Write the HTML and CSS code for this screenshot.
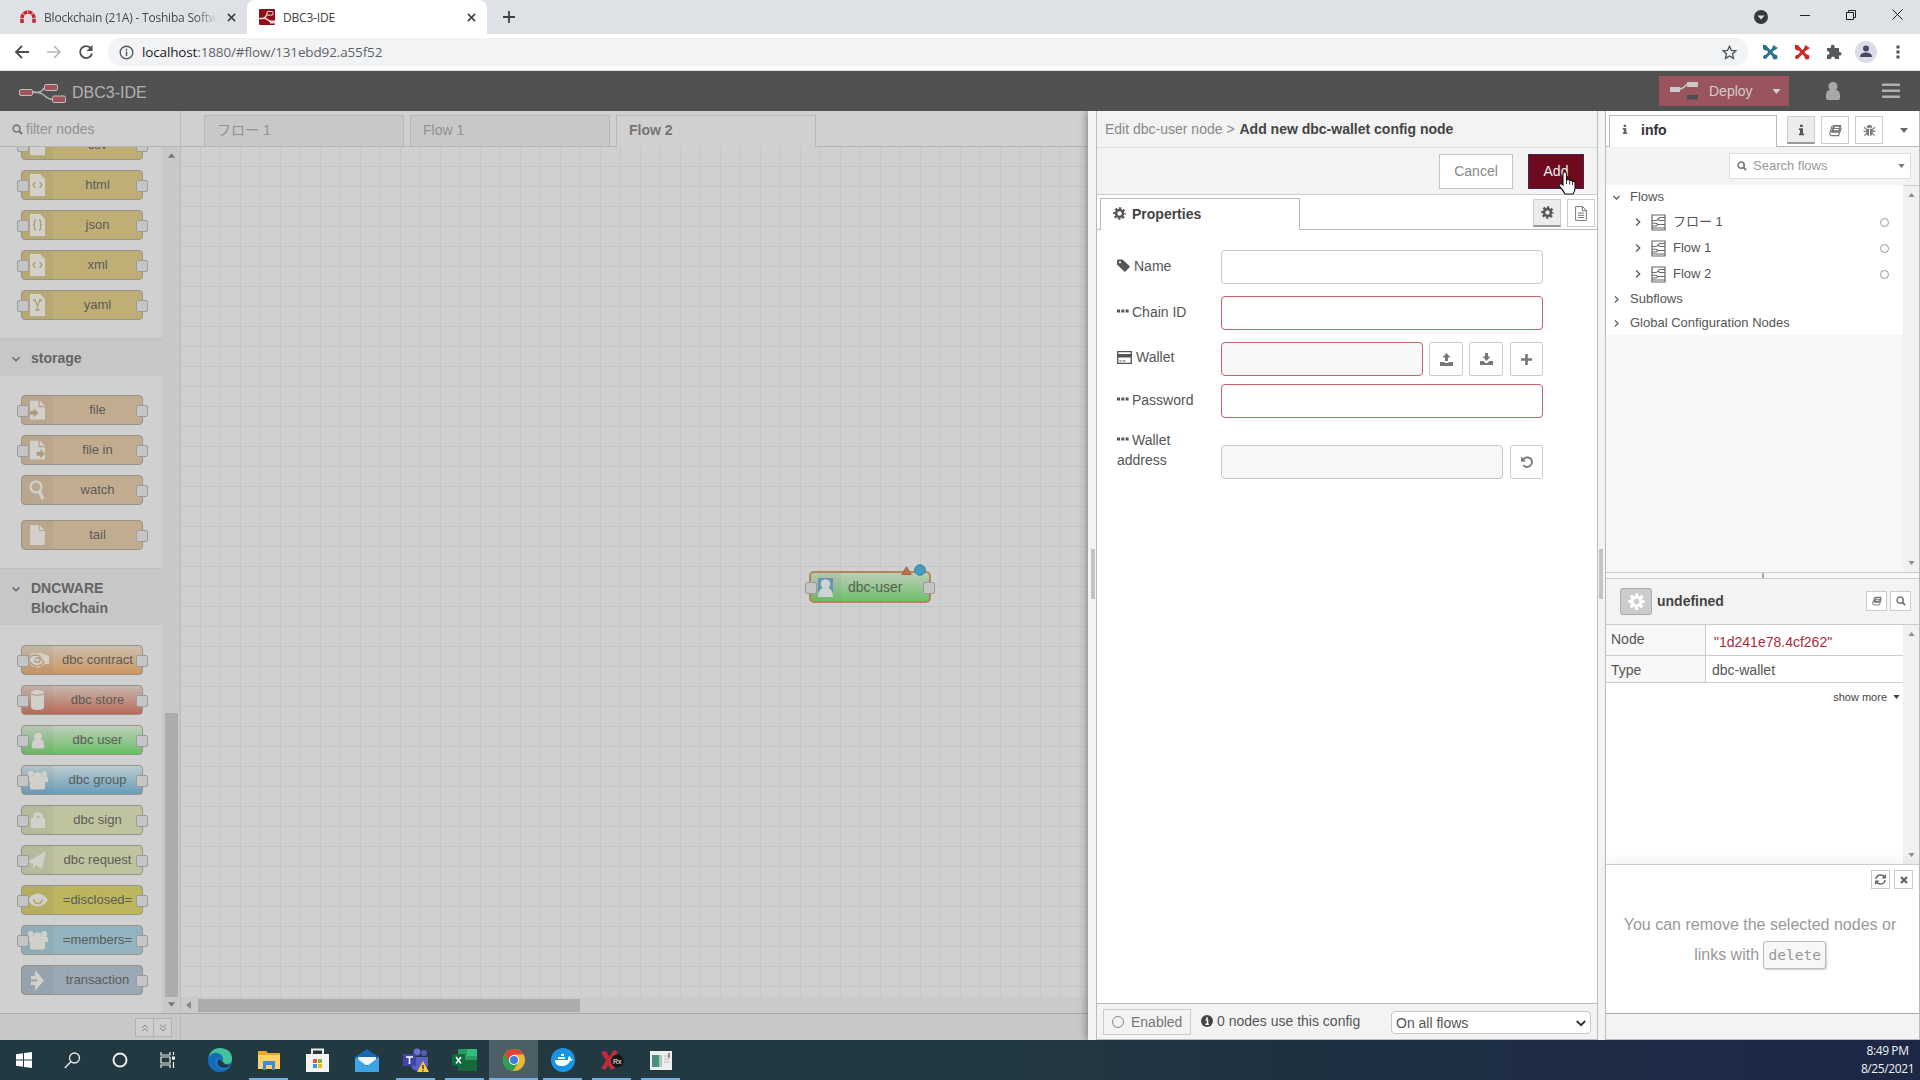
FILE: index.html
```html
<!DOCTYPE html>
<html lang="en">
<head>
<meta charset="utf-8">
<title>DBC3-IDE</title>
<link rel="stylesheet" href="styles.css">
</head>
<body>
<svg class="defs" width="0" height="0">
  <defs>
    <symbol id="chev-down" viewBox="0 0 10 10"><path d="M1.5 3.2 5 6.7 8.5 3.2" fill="none" stroke="currentColor" stroke-width="1.4"/></symbol>
    <symbol id="chev-bold" viewBox="0 0 10 10"><path d="M.8 3 5 7.200 9.200 3" fill="none" stroke="currentColor" stroke-width="2"/></symbol>
    <symbol id="chev-right" viewBox="0 0 10 10"><path d="M3.2 1.5 6.7 5 3.2 8.5" fill="none" stroke="currentColor" stroke-width="1.3"/></symbol>
    <symbol id="close" viewBox="0 0 10 10"><path d="M1 1 9 9M9 1 1 9" fill="none" stroke="currentColor" stroke-width="1.7"/></symbol>
    <symbol id="search" viewBox="0 0 12 12"><circle cx="5" cy="5" r="3.7" fill="none" stroke="currentColor" stroke-width="1.8"/><path d="M7.6 7.6 11 11" stroke="currentColor" stroke-width="2.2"/></symbol>
    <symbol id="gear" viewBox="0 0 16 16"><circle cx="8" cy="8" r="4.2" fill="none" stroke="currentColor" stroke-width="3"/><circle cx="8" cy="8" r="6.4" fill="none" stroke="currentColor" stroke-width="2.6" stroke-dasharray="2.8 2.226" stroke-dashoffset="1.4"/></symbol>
    <symbol id="dots" viewBox="0 0 12 4"><path d="M0 .5h3v3H0zM4.3.5h3v3h-3zM8.6.5h3v3h-3z" fill="currentColor"/></symbol>
    <symbol id="book" viewBox="0 0 14 14"><path d="M4.500 1h9l-2.500 8.500H2z" fill="currentColor"/><path d="M6 3.600h5M5.300 6h5" stroke="#fff" stroke-width="1.200"/><path d="M3.300 2 1 9.500q-.4 3 1.600 3h7.700L13.300 4" fill="none" stroke="currentColor" stroke-width="1.300"/></symbol>
    <symbol id="bug" viewBox="0 0 14 14"><path d="M4 4q0-3 3-3t3 3zM3.500 5h3v8q-3-.5-3-4zM7.500 5h3v4q0 3.500-3 4z" fill="currentColor"/><path d="M1 3.500 4 6M13 3.500 10 6M.5 8H4m6 0h3.500M1.500 12.500 4 10m8.500 2.500L10 10" stroke="currentColor" stroke-width="1.200"/></symbol>
    <symbol id="info-i" viewBox="0 0 8 14"><path d="M2.300.8h3.200v2.700H2.300zM1 5h4.700v6H7v2H1v-2h1.300V7H1z" fill="currentColor"/></symbol>
    <symbol id="flow" viewBox="0 0 15 17"><path d="M1 1h13v15H1z" fill="none" stroke="currentColor" stroke-width="1.200"/><path d="M1 6.500h3q2.500 0 3.500-1.800M14 3.500H9q-1.500 0-1.500 1.300T9 6.500h5M1 9.300h4q1.500 0 1.500 1.200T5 12H1M6.500 10.500H14M1 14h13" fill="none" stroke="currentColor" stroke-width="1.100"/></symbol>
    <symbol id="file" viewBox="0 0 16 22"><path d="M0 0h10l6 6v16H0z" fill="currentColor"/><path d="M10 0v6h6" fill="none" stroke="#b5a284"/></symbol>
    <symbol id="person" viewBox="0 0 16 18"><circle cx="8" cy="4.500" r="4.500" fill="currentColor"/><path d="M1 14q0-6 4-6h6q4 0 4 6v2q0 2-2 2H3q-2 0-2-2z" fill="currentColor"/></symbol>
    <symbol id="people" viewBox="0 0 22 20"><circle cx="4" cy="3.500" r="3" fill="currentColor"/><circle cx="18" cy="3.500" r="3" fill="currentColor"/><path d="M0 12V9q0-3 3-3h16q3 0 3 3v3h-3v5q0 3-3 3H6q-3 0-3-3v-5z" fill="currentColor"/><circle cx="11" cy="6" r="4" fill="currentColor"/></symbol>
    <symbol id="tri-up" viewBox="0 0 8 5"><path d="M0 5 4 0l4 5z" fill="currentColor"/></symbol>
    <symbol id="tri-down" viewBox="0 0 8 5"><path d="M0 0h8L4 5z" fill="currentColor"/></symbol>
    <symbol id="tri-left" viewBox="0 0 5 8"><path d="M5 0v8L0 4z" fill="currentColor"/></symbol>
    <symbol id="wrench" viewBox="0 0 16 16"><path d="M3 13.500 12.500 4M3.500 3 13 13" stroke="currentColor" stroke-width="3"/><path d="M1 1v4l3 2 2-3-2-3zM11 1l-1 4 3 1 3-2" fill="currentColor"/><circle cx="13" cy="13" r="2.500" fill="currentColor"/><circle cx="3" cy="13" r="2" fill="currentColor"/></symbol>
  </defs>
</svg>

<div class="tabstrip">
  <div class="btab first">
    <svg width="16" height="16" viewBox="0 0 16 16"><path d="M2 14V9a6 6 0 0 1 12 0v5" fill="none" stroke="#c4262c" stroke-width="3.500" stroke-dasharray="4 .8"/></svg>
    <span class="btitle fade">Blockchain (21A) - Toshiba Softw</span>
    <svg class="bclose" width="9" height="9"><use href="#close"/></svg>
  </div>
  <div class="btab active">
    <svg width="16" height="16" viewBox="0 0 16 16"><rect width="16" height="16" rx="1" fill="#8f1016"/><path d="M0 9.500h3q3 0 4-2.500t3-2.500M4 9q3 0 5 2t5 2" fill="none" stroke="#f1dede" stroke-width="1.300"/><rect x="8" y="2.500" width="6" height="3.600" rx="1" fill="#8f1016" stroke="#f1dede"/><path d="M11 11.500h5v3h-5z" fill="#f1dede"/></svg>
    <span class="btitle">DBC3-IDE</span>
    <svg class="bclose" width="9" height="9"><use href="#close"/></svg>
  </div>
  <svg class="plus" width="12" height="12" viewBox="0 0 12 12"><path d="M6 0v12M0 6h12" stroke="#3c4043" stroke-width="1.800"/></svg>
  <div class="winctl">
    <svg width="14" height="14" viewBox="0 0 14 14"><circle cx="7" cy="7" r="7" fill="#35393d"/><path d="M3.500 5.500h7L7 9.500z" fill="#dee1e6"/></svg>
    <svg width="10" height="10" viewBox="0 0 10 10"><path d="M0 5.500h10" stroke="#222"/></svg>
    <svg width="10" height="10" viewBox="0 0 10 10"><path d="M.5 2.500h7v7h-7zM2.500 2.500v-2h7v7h-2" fill="none" stroke="#222"/></svg>
    <svg width="11" height="11" viewBox="0 0 11 11"><path d="M.5.5l10 10M10.500.5l-10 10" stroke="#222"/></svg>
  </div>
</div>

<div class="toolbar">
  <svg width="16" height="16" viewBox="0 0 16 16"><path d="M15 8H2M8 2 2 8l6 6" fill="none" stroke="#4b4f53" stroke-width="1.800"/></svg>
  <svg width="16" height="16" viewBox="0 0 16 16"><path d="M1 8h13M8 2l6 6-6 6" fill="none" stroke="#b4b7ba" stroke-width="1.600"/></svg>
  <svg width="16" height="16" viewBox="0 0 16 16"><path d="M13 4.500A6 6 0 1 0 14 9.500" fill="none" stroke="#4b4f53" stroke-width="1.800"/><path d="M14.500 1v6h-6z" fill="#4b4f53"/></svg>
  <div class="address">
    <svg width="15" height="15" viewBox="0 0 15 15"><circle cx="7.500" cy="7.500" r="6.300" fill="none" stroke="#55595d" stroke-width="1.400"/><path d="M7.500 6.500V11M7.500 3.800v1.600" stroke="#55595d" stroke-width="1.500"/></svg>
    <span class="url"><b>localhost</b>:1880/#flow/131ebd92.a55f52</span>
    <svg class="star" width="15" height="15" viewBox="0 0 15 15"><path d="m7.500 1.200 1.900 4.200 4.500.4-3.400 3 1 4.500-4-2.400-4 2.400 1-4.500-3.400-3 4.500-.4z" fill="none" stroke="#4b4f53" stroke-width="1.300"/></svg>
  </div>
  <div class="ext">
    <svg width="16" height="16" color="#2b7391"><use href="#wrench"/></svg>
    <svg width="16" height="16" color="#cf2a28"><use href="#wrench"/></svg>
    <svg width="16" height="16" viewBox="0 0 16 16"><path d="M1 4h4q-.8-3.300 1.700-3.300T8.500 4H13v4q2.500-.5 2.500 1.700T13 11.500V15H9q0-2.500-2-2.500T5 15H1v-4q2.500 0 2.500-2T1 7z" fill="#55595d"/></svg>
    <svg width="22" height="22" viewBox="0 0 22 22"><circle cx="11" cy="11" r="11" fill="#dadce6"/><circle cx="11" cy="7.500" r="3" fill="#46486b"/><path d="M5 16q0-4.500 6-4.500t6 4.500z" fill="#46486b"/></svg>
    <svg width="4" height="14" viewBox="0 0 4 14"><path d="M.5.5h3v3h-3zM.5 5.500h3v3h-3zM.5 10.500h3v3h-3z" fill="#4b4f53"/></svg>
  </div>
</div>

<header class="header">
  <svg class="logo" width="48" height="20" viewBox="0 0 48 20"><path d="M13 9q9 2 12-4M14 9q8 0 12 4t9 3" fill="none" stroke="#b5b5b5" stroke-width="1.600"/><g fill="#a0545a" stroke="#bdbdbd"><rect x=".5" y="6.500" width="13" height="6" rx="1.500"/><rect x="25.500" y="1.500" width="13" height="6" rx="1.500"/><rect x="33.500" y="13" width="13" height="6.500" rx="1.500"/></g></svg>
  <span class="brand">DBC3-IDE</span>
  <div class="deploy">
    <svg width="30" height="20" viewBox="0 0 30 20"><path d="M8 8q5 0 7-3t6-2" fill="none" stroke="#c9c9c9" stroke-width="1.500"/><path d="M0 6h10v5H0zM17 1h11v5H17z" fill="#c9c9c9"/><path d="M17 14h11v4.500H17z" fill="#4f4f4f"/></svg>
    <span>Deploy</span>
    <svg width="9" height="5" color="#d0d0d0"><use href="#tri-down"/></svg>
  </div>
  <svg class="user" width="16" height="18" color="#a8a8a8"><use href="#person"/></svg>
  <svg class="menu" width="18" height="16" viewBox="0 0 18 16"><path d="M0 1.700h18M0 7.700h18M0 13.700h18" stroke="#b0b0b0" stroke-width="2.600"/></svg>
</header>

<main class="main">
  <aside class="palette">
    <div class="filter"><svg width="11" height="11"><use href="#search"/></svg>filter nodes</div>
    <div class="pal-scroll">
      <div class="pal-list">
        <div class="nodes cut">
          <div class="node yellow io"><i><svg width="15" height="22"><use href="#file"/></svg></i><span>csv</span></div>
          <div class="node yellow io"><i><svg width="15" height="22" viewBox="0 0 15 22"><path d="M0 0h10l5 5v17H0z" fill="currentColor"/><path d="M5.500 8 3 11l2.500 3m4-6 2.500 3-2.500 3" fill="none" stroke="#a99d6c" stroke-width="1.300"/></svg></i><span>html</span></div>
          <div class="node yellow io"><i><svg width="15" height="22" viewBox="0 0 15 22"><path d="M0 0h10l5 5v17H0z" fill="currentColor"/><path d="M6 6q-2 0-1.500 2.500T3 11q2 0 1.500 2.500T6 16m3-10q2 0 1.500 2.500T12 11q-2 0-1.500 2.500T9 16" fill="none" stroke="#a99d6c" stroke-width="1.300"/></svg></i><span>json</span></div>
          <div class="node yellow io"><i><svg width="15" height="22" viewBox="0 0 15 22"><path d="M0 0h10l5 5v17H0z" fill="currentColor"/><path d="M5.500 8 3 11l2.500 3m4-6 2.500 3-2.500 3" fill="none" stroke="#a99d6c" stroke-width="1.300"/></svg></i><span>xml</span></div>
          <div class="node yellow io"><i><svg width="15" height="22" viewBox="0 0 15 22"><path d="M0 0h10l5 5v17H0z" fill="currentColor"/><path d="M3 6h3m3 0h3M4.500 6l3 5 3-5m-3 5v5m-2 0h4" fill="none" stroke="#a99d6c" stroke-width="1.300"/></svg></i><span>yaml</span></div>
        </div>
        <div class="cat"><svg width="10" height="10"><use href="#chev-down"/></svg><b>storage</b></div>
        <div class="nodes stor">
          <div class="node tan io"><i><svg width="15" height="20" viewBox="0 0 16 20"><path d="M0 0h9v7h7v13H0zM10.500 0 16 5.500h-5.500z" fill="currentColor"/><path d="M0 11h4V8l5 5-5 5v-3H0z" fill="#ae9b7c"/></svg></i><span>file</span></div>
          <div class="node tan io"><i><svg width="15" height="20" viewBox="0 0 16 20"><path d="M0 0h9v7h7v13H0zM10.500 0 16 5.500h-5.500z" fill="currentColor"/><path d="M7 12h4V9l5 5-5 5v-3H7z" fill="#ae9b7c"/></svg></i><span>file in</span></div>
          <div class="node tan out"><i><svg width="17" height="21" viewBox="0 0 17 21"><circle cx="7" cy="7" r="5.500" fill="#baa893" stroke="currentColor" stroke-width="2.200"/><path d="m10 11 4 8" stroke="currentColor" stroke-width="3.200"/></svg></i><span>watch</span></div>
          <div class="node tan out last"><i><svg width="15" height="20"><use href="#file"/></svg></i><span>tail</span></div>
        </div>
        <div class="cat tall"><svg width="10" height="10"><use href="#chev-down"/></svg><b>DNCWARE<br>BlockChain</b></div>
        <div class="nodes dnc">
          <div class="node orange io"><i><svg width="23" height="18" viewBox="0 0 23 18"><path d="M0 8 6 2h9l8 3v8h-4l-7 4-6-2z" fill="currentColor"/><path d="M3 9q0-5 7-5 4 0 5 4l3 3q-3 4-8 4-6-2-7-6m6-1q5-3 5 1t-6 1" fill="none" stroke="#b99b78" stroke-width="1.400"/></svg></i><span>dbc contract</span></div>
          <div class="node red io"><i><svg width="13" height="20" viewBox="0 0 13 20"><path d="M0 3q0-3 6.500-3T13 3v14q0 3-6.500 3T0 17z" fill="currentColor"/><path d="M0 4q6 3 13 0" fill="none" stroke="#b0958b"/></svg></i><span>dbc store</span></div>
          <div class="node green io"><i><svg width="14" height="17"><use href="#person"/></svg></i><span>dbc user</span></div>
          <div class="node blue io"><i><svg width="21" height="20"><use href="#people"/></svg></i><span>dbc group</span></div>
          <div class="node olive io"><i><svg width="14" height="17" viewBox="0 0 14 17"><path d="M0 6h14v10H0z" fill="currentColor"/><path d="M3 7V4.500Q3 1 7 1t4 3.500V7" fill="currentColor" stroke="currentColor" stroke-width="1.500"/><circle cx="7" cy="5" r="1.500" fill="#b9bb9f"/></svg></i><span>dbc sign</span></div>
          <div class="node olive io"><i><svg width="19" height="19" viewBox="0 0 19 19"><path d="m0 11 18-11-4 18-6-4-3 4v-5z" fill="currentColor"/></svg></i><span>dbc request</span></div>
          <div class="node mustard io"><i><svg width="20" height="14" viewBox="0 0 20 14"><path d="M0 7q4-6.500 10-6.500T20 7q-4 6.500-10 6.500T0 7z" fill="currentColor"/><path d="M6 6q0 4.500 4 4.500T14 6" fill="none" stroke="#b0aa5e" stroke-width="1.500"/></svg></i><span>=disclosed=</span></div>
          <div class="node teal io"><i><svg width="21" height="20"><use href="#people"/></svg></i><span>=members=</span></div>
          <div class="node slate out"><i><svg width="13" height="21" viewBox="0 0 13 21"><path d="M4 0 13 10.500 4 21v-6H0v-3.500h6v-2H0V6h4z" fill="currentColor"/></svg></i><span>transaction</span></div>
        </div>
      </div>
      <div class="pal-bar">
        <svg width="7" height="5"><use href="#tri-up"/></svg>
        <div class="thumb"></div>
        <svg width="7" height="5"><use href="#tri-down"/></svg>
      </div>
    </div>
    <div class="pal-foot"><span><svg width="8" height="8" viewBox="0 0 8 8"><path d="m1 4 3-3 3 3M1 7.500l3-3 3 3" fill="none" stroke="currentColor"/></svg></span><span><svg width="8" height="8" viewBox="0 0 8 8"><path d="m1 .5 3 3 3-3M1 4l3 3 3-3" fill="none" stroke="currentColor"/></svg></span></div>
  </aside>

  <section class="workspace">
    <div class="wtabs"><div class="wtab">フロー 1</div><div class="wtab">Flow 1</div><div class="wtab on">Flow 2</div></div>
    <div class="canvas">
      <div class="flownode">
        <svg class="uicon" width="15" height="19" viewBox="0 0 15 19"><rect width="15" height="19" fill="#6791ba"/><circle cx="7.500" cy="6" r="4.800" fill="#ccd5d2"/><path d="M0 19q0-9.500 7.500-9.500T15 19z" fill="#ccd5d2"/></svg>
        <span>dbc-user</span>
        <svg class="warn" width="11" height="9" viewBox="0 0 11 9"><path d="m5.500.8 4.700 7.700H.8z" fill="#b87351" stroke="#a85f3c"/></svg>
        <svg class="dot" width="12" height="12" viewBox="0 0 12 12"><circle cx="6" cy="6" r="5.300" fill="#449bbd" stroke="#3383a8"/></svg>
      </div>
    </div>
    <div class="hbar"><svg width="5" height="8"><use href="#tri-left"/></svg><div class="hthumb"></div></div>
    <div class="wfoot"></div>
  </section>

  <section class="tray">
    <div class="grip"></div>
    <div class="tray-in">
      <div class="crumb">Edit dbc-user node &gt; <b>Add new dbc-wallet config node</b></div>
      <div class="tbar"><div class="btn cancel">Cancel</div><div class="btn add">Add
        <svg class="hand" width="18" height="24" viewBox="0 0 18 24"><path d="M5 14V3q0-2 1.700-2T8.500 3v6q2.500-1.400 3.200.6 2.300-.9 2.800.9 2.500-.6 2.500 1.800V17q0 3-2 6H7Q5 19 1.200 15q-.7-2 1.200-2.200Q4 13 5 14z" fill="#fff" stroke="#111" stroke-width="1.100"/><path d="M8.500 9v4m3.200-3v3.500m2.800-2.500v3" stroke="#222" stroke-width=".9"/></svg>
      </div></div>
      <div class="ttabs">
        <div class="ttab"><svg width="13" height="13"><use href="#gear"/></svg><b>Properties</b></div>
        <div class="sq on"><svg width="13" height="13"><use href="#gear"/></svg></div>
        <div class="sq"><svg width="12" height="15" viewBox="0 0 12 15"><path d="M.6.6h7l3.800 3.800v10H.6zM7.500.6v4h4M3 7h6M3 9.300h6M3 11.600h6" fill="none" stroke="currentColor"/></svg></div>
      </div>
      <div class="form">
        <div class="row"><label><svg width="13" height="13" viewBox="0 0 13 13"><path d="M0 1.500Q0 .5 1 .5h4.500L12.500 7q.5.600 0 1.200l-4 4.200q-.6.500-1.200 0L0 5.500z" fill="currentColor"/><circle cx="3" cy="3.300" r="1.100" fill="#fff"/></svg>Name</label><div class="inp"></div></div>
        <div class="row chain"><label><svg width="12" height="4"><use href="#dots"/></svg>Chain ID</label><div class="inp err"></div></div>
        <div class="row wal"><label><svg width="15" height="13" viewBox="0 0 15 13"><path d="M.7.7h13.600v11.600H.7z" fill="none" stroke="currentColor" stroke-width="1.300"/><path d="M0 3h15v3.500H0zM2.500 9.500h2v1h-2zm3 0h3v1h-3z" fill="currentColor"/></svg>Wallet</label><div class="inp err dis"></div>
          <div class="ib b1"><svg width="13" height="13" viewBox="0 0 13 13"><path d="M6.500 0 10.500 4.500H8V8H5V4.500H2.500zM0 9h4l1 1h3l1-1h4v4H0z" fill="currentColor"/></svg></div>
          <div class="ib b2"><svg width="13" height="13" viewBox="0 0 13 13"><path d="M5 0h3v3.500h2.500l-4 4.500-4-4.500H5zM0 8h3.500l2 2h2l2-2H13v4H0z" fill="currentColor"/></svg></div>
          <div class="ib b3"><svg width="11" height="11" viewBox="0 0 11 11"><path d="M5.500 0v11M0 5.500h11" stroke="currentColor" stroke-width="2.600"/></svg></div></div>
        <div class="row pass"><label><svg width="12" height="4"><use href="#dots"/></svg>Password</label><div class="inp err"></div></div>
        <div class="row addr"><label><svg width="12" height="4"><use href="#dots"/></svg>Wallet<br>address</label><div class="inp dis"></div>
          <div class="ib b3"><svg width="12" height="12" viewBox="0 0 12 12"><path d="M1.800 4Q4 .8 7 1.500q4 1 4 4.500-.5 4.800-5 5-2 0-3.800-1.800" fill="none" stroke="currentColor" stroke-width="1.800"/><path d="M0 .5v5h5z" fill="currentColor"/></svg></div></div>
      </div>
      <div class="tfoot">
        <div class="enabled"><i></i>Enabled</div>
        <div class="uses"><svg width="12" height="12" viewBox="0 0 12 12"><circle cx="6" cy="6" r="6" fill="#444"/><path d="M4.500 5h2v4M4.300 9.300h3.600M6 2.200V4" fill="none" stroke="#fff" stroke-width="1.500"/></svg>0 nodes use this config</div>
        <div class="select">On all flows<svg width="10" height="10"><use href="#chev-bold"/></svg></div>
      </div>
    </div>
  </section>

  <div class="sep"></div>

  <aside class="sidebar">
    <div class="stabs">
      <div class="stab"><svg width="6" height="11"><use href="#info-i"/></svg><b>info</b></div>
      <div class="sq on"><svg width="7" height="12"><use href="#info-i"/></svg></div>
      <div class="sq"><svg width="13" height="13"><use href="#book"/></svg></div>
      <div class="sq"><svg width="13" height="13"><use href="#bug"/></svg></div>
      <svg class="more" width="8" height="5"><use href="#tri-down"/></svg>
    </div>
    <div class="ssearch"><div><svg width="10" height="10"><use href="#search"/></svg><span>Search flows</span><svg width="7" height="4"><use href="#tri-down"/></svg></div></div>
    <div class="outline">
      <div class="tree">
        <div class="t0"><svg width="9" height="9"><use href="#chev-down"/></svg>Flows</div>
        <div class="t1"><svg width="10" height="10"><use href="#chev-right"/></svg><svg width="15" height="17"><use href="#flow"/></svg><span>フロー 1</span><i></i></div>
        <div class="t1"><svg width="10" height="10"><use href="#chev-right"/></svg><svg width="15" height="17"><use href="#flow"/></svg><span>Flow 1</span><i></i></div>
        <div class="t1"><svg width="10" height="10"><use href="#chev-right"/></svg><svg width="15" height="17"><use href="#flow"/></svg><span>Flow 2</span><i></i></div>
        <div class="t0"><svg width="9" height="9"><use href="#chev-right"/></svg>Subflows</div>
        <div class="t0"><svg width="9" height="9"><use href="#chev-right"/></svg>Global Configuration Nodes</div>
      </div>
      <div class="vbar"><svg width="7" height="4"><use href="#tri-up"/></svg><svg width="7" height="4"><use href="#tri-down"/></svg></div>
    </div>
    <div class="split"><i></i></div>
    <div class="ihead"><div class="gearbox"><svg width="17" height="17"><use href="#gear"/></svg></div><b>undefined</b>
      <div class="mini"><svg width="10" height="10"><use href="#book"/></svg></div><div class="mini"><svg width="10" height="10"><use href="#search"/></svg></div></div>
    <div class="details">
      <div class="dcol">
        <div class="drow r1"><span>Node</span><em>"1d241e78.4cf262"</em></div>
        <div class="drow r2"><span>Type</span><em>dbc-wallet</em></div>
        <div class="showmore">show more <svg width="7" height="4"><use href="#tri-down"/></svg></div>
      </div>
      <div class="vbar"><svg width="7" height="4"><use href="#tri-up"/></svg><svg width="7" height="4"><use href="#tri-down"/></svg></div>
    </div>
    <div class="tips">
      <div class="tipbtns"><div><svg width="11" height="11" viewBox="0 0 11 11"><path d="M1 5q.5-4 4.500-4Q8 1 9.500 3M10 6q-.5 4-4.500 4Q3 10 1.500 8" fill="none" stroke="currentColor" stroke-width="1.500"/><path d="M11 0v4.500H6.500zM0 11V6.500h4.500z" fill="currentColor"/></svg></div><div><svg width="8" height="8" viewBox="0 0 8 8"><path d="m1 1 6 6m0-6L1 7" stroke="currentColor" stroke-width="2.300"/></svg></div></div>
      <p>You can remove the selected nodes or<br>links with <kbd>delete</kbd></p>
    </div>
    <div class="sfoot"></div>
  </aside>
</main>

<footer class="taskbar">
  <div class="tk"><svg width="16" height="16" viewBox="0 0 16 16"><path d="M0 2.200 7 1.200v6.300H0zM8 1l8-1v7.500H8zM0 8.500h7v6.300l-7-1zM8 8.500h8V16l-8-1z" fill="#fff"/></svg></div>
  <div class="tk"><svg width="17" height="17" viewBox="0 0 17 17"><circle cx="10.500" cy="6" r="5" fill="none" stroke="#e8eaeb" stroke-width="1.300"/><path d="M7 9.500.8 16" stroke="#e8eaeb" stroke-width="1.400"/></svg></div>
  <div class="tk"><svg width="16" height="16" viewBox="0 0 16 16"><circle cx="8" cy="8" r="6.500" fill="none" stroke="#eee" stroke-width="2"/></svg></div>
  <div class="tk"><svg width="16" height="16" viewBox="0 0 16 16"><path d="M1 0v3h9V0M1 16v-3h9v3M1 5h9v6H1zM13.500 0v3m0 2v3m0 2v6" fill="none" stroke="#eee" stroke-width="1.200"/><path d="M12 4.500h3v3h-3z" fill="#eee"/></svg></div>
  <div class="tk w edge"><svg width="24" height="24" viewBox="0 0 24 24"><circle cx="12" cy="12" r="12" fill="#1b78c9"/><path d="M1 8Q4 0 12 0q12 1 12 11 0 5-6 5-4 0-3-3 1-5-5-6-6 0-9 4z" fill="#43c39a"/><path d="M1 9q3-5 9-4 5 2 5 6-4-3-7 0-2 5 2 9 5 3 10 0-4 5-10 4Q1 22 0 12z" fill="#1769b9"/><path d="M11 11q-3 4 0 7t9 1l3-3q-6 2-8-2z" fill="#233942"/></svg></div>
  <div class="tk w run"><svg width="22" height="20" viewBox="0 0 22 20"><path d="M0 1h8l2 2h12v16H0z" fill="#e5a92d"/><path d="M0 5h22v14H0z" fill="#fbd266"/><path d="M5 11h12v9h-3v-5H8v5H5z" fill="#3c8ad4"/></svg></div>
  <div class="tk w"><svg width="23" height="24" viewBox="0 0 23 24"><path d="M6 7V1.500h11V7" fill="none" stroke="#eee" stroke-width="2"/><path d="M0 6h23v18H0z" fill="#f4f4f4"/><path d="M7 11h4v4H7z" fill="#e65b2c"/><path d="M12 11h4v4h-4z" fill="#80b82e"/><path d="M7 16h4v4H7z" fill="#2ca3dd"/><path d="M12 16h4v4h-4z" fill="#f3b51d"/></svg></div>
  <div class="tk w"><svg width="24" height="23" viewBox="0 0 24 23"><path d="m0 8 12-8 12 8v15H0z" fill="#1768b0"/><path d="M3 8h18v8H3z" fill="#f3f7fa"/><path d="m0 8 12 9 12-9v15H0z" fill="#3ea5e5"/></svg></div>
  <div class="tk w run"><svg width="26" height="25" viewBox="0 0 26 25"><circle cx="14" cy="4" r="3.500" fill="#6c70cf"/><circle cx="21" cy="5" r="3" fill="#5559b5"/><path d="M8 9h17v9q-3 5-9 5t-8-5z" fill="#5b60c2"/><path d="M0 6h13v12H0z" fill="#3f45a6"/><path d="M3 9h7M6.500 9v7" stroke="#fff" stroke-width="1.600"/><path d="m20 13 6 11H14z" fill="#f8cf3b"/><path d="M20 17v4m0 1v1.200" stroke="#222" stroke-width="1.300"/></svg></div>
  <div class="tk w run"><svg width="25" height="22" viewBox="0 0 25 22"><path d="M6 0h19v22H6z" fill="#2a9b60"/><path d="M15 0h10v7H15z" fill="#37bd7b"/><path d="M6 11h19v11H6z" fill="#17673d"/><path d="M0 5h13v12H0z" fill="#0f6a39"/><path d="m4 8 5 6.500m0-6.500-5 6.500" stroke="#fff" stroke-width="1.500"/></svg></div>
  <div class="tk w run hot"><svg width="22" height="22" viewBox="0 0 22 22"><circle cx="11" cy="11" r="11" fill="#e8b92f"/><path d="M1.500 5.500A11 11 0 0 1 20.500 5.500H11L6 13z" fill="#dc4335"/><path d="M1.500 5.500A11 11 0 0 0 10 22l5-8-7 0z" fill="#2f9e4f"/><circle cx="11" cy="11" r="5" fill="#fff"/><circle cx="11" cy="11" r="4" fill="#3f7de0"/></svg></div>
  <div class="tk w run"><svg width="24" height="24" viewBox="0 0 24 24"><circle cx="12" cy="12" r="12" fill="#1b94e6"/><path d="M4 12h13q0-3 1-4 2 1 2 3h2q-1 2-3 2-2 5-8 5-7 0-7-6zM7 9h7v2H7zm3-3h3v2h-3z" fill="#fff"/></svg></div>
  <div class="tk w run"><svg width="24" height="20" viewBox="0 0 24 20"><path d="m1 2 5-1 9 17-4 2zM14 0l4 2L5 20l-4-2z" fill="#bd2c3b"/><circle cx="17.500" cy="11" r="6.500" fill="#161616"/><text x="13" y="14" class="rx">Rx</text></svg></div>
  <div class="tk w run"><svg width="22" height="19" viewBox="0 0 22 19"><path d="M0 0h22v19H0z" fill="#eee"/><path d="M2 4h10v12H2z" fill="#4d8e80"/><path d="M9 4h3v12H9z" fill="#a8c8be"/><path d="M14 5h5M14 8h5M14 11h5" stroke="#bbb"/><path d="M19 2v5" stroke="#333"/></svg></div>
  <div class="clock">8:49 PM<br>8/25/2021</div>
</footer>
</body>
</html>
```
FILE: styles.css
```css
* { box-sizing: border-box; }
html, body { margin: 0; height: 100%; }
body {
  width: 1920px; height: 1080px; overflow: hidden;
  display: flex; flex-direction: column;
  font-family: "Liberation Sans", "Noto Sans CJK JP", sans-serif;
  font-size: 14px; line-height: 20px; color: #555; background: #fff;
}
svg { display: block; flex: none; }
.defs { position: absolute; }
i, em { font-style: normal; }

/* browser chrome */
.tabstrip { height: 34px; flex: none; background: #dee2e6; display: flex; align-items: center; font: 12px "Open Sans", "Noto Sans", sans-serif; color: #45494d; }
.btab { height: 34px; display: flex; align-items: center; }
.btab.first { width: 247px; padding-left: 20px; }
.btab.active { width: 240px; padding-left: 12px; background: #fff; border-radius: 8px 8px 0 0; color: #3c4043; }
.btitle { margin-left: 8px; white-space: nowrap; letter-spacing: -.2px; }
.btitle.fade { width: 173px; overflow: hidden; -webkit-mask-image: linear-gradient(90deg, #000 88%, transparent); mask-image: linear-gradient(90deg, #000 88%, transparent); }
.bclose { margin-left: auto; margin-right: 11px; color: #3c4043; }
.plus { margin-left: 16px; }
.winctl { margin-left: auto; display: flex; align-items: center; padding-right: 17px; margin-top: -5px; }
.winctl svg:first-child { margin-right: 37px; margin-top: 4px; margin-left: 6px; }
.winctl svg:nth-child(2) { margin-right: 36px; }
.winctl svg:nth-child(3) { margin-right: 36px; }
.winctl svg:first-child { margin-right: 32px; }
.toolbar { height: 37px; flex: none; display: flex; align-items: center; padding-left: 14px; gap: 16px; background: #fff; border-bottom: 1px solid #e4e4e4; }
.address { width: 1640px; height: 28px; margin-left: -2px; border-radius: 14px; background: #f2f3f4; display: flex; align-items: center; padding: 0 11px; font: 13.500px "Open Sans", sans-serif; }
.url { margin-left: 8px; color: #5f6368; letter-spacing: -.14px; white-space: nowrap; }
.url b { font-weight: 400; color: #202124; }
.star { margin-left: auto; }
.ext { display: flex; align-items: center; margin-left: -2px; }
.ext svg:nth-child(1), .ext svg:nth-child(2) { margin-right: 16px; }
.ext svg:nth-child(3) { margin-right: 13px; }
.ext svg:nth-child(4) { margin-right: 19px; }

/* application header */
.header { height: 40px; flex: none; background: #515151; display: flex; align-items: center; padding: 0 20px 0 19px; }
.logo { margin-top: 3px; }
.brand { font-size: 16px; margin: 3px 0 0 5px; color: #b2b2b2; }
.deploy { margin-left: auto; width: 130px; height: 30px; background: #9a545e; color: #d4cccd; display: flex; align-items: center; padding-left: 11px; font-size: 14px; }
.deploy span { margin-left: 9px; width: 63px; }
.user { margin-left: 36px; }
.menu { margin-left: 41px; }

.main { height: 929px; flex: none; display: flex; }

/* node palette */
.palette { width: 181px; flex: none; background: #d0d0d0; border-right: 1px solid #bababa; display: flex; flex-direction: column; }
.filter { height: 36px; flex: none; border-bottom: 1px solid #b5b5b5; display: flex; align-items: center; padding: 1px 0 0 12px; gap: 3px; color: #929292; }
.filter svg { color: #777; }
.pal-scroll { height: 866px; display: flex; }
.pal-list { width: 162px; overflow: hidden; }
.pal-bar { flex: 1; background: #c8c8c8; display: flex; flex-direction: column; align-items: center; padding: 6px 0; color: #777; }
.thumb { width: 13px; height: 284px; background: #acacac; margin: auto 0 5px; }
.nodes { display: flex; flex-direction: column; align-items: flex-start; gap: 10px; padding-left: 21px; }
.nodes.cut { margin-top: -17px; height: 208px; }
.nodes.stor { height: 192px; padding-top: 19px; }
.nodes.dnc { padding-top: 20px; }
.cat { height: 38px; background: #c7c7c7; border-top: 1px solid #bfbfbf; display: flex; padding: 9px 0 0 11px; gap: 10px; color: #646464; }
.cat svg { margin-top: 6px; }
.cat.tall { height: 57px; }
.node { width: 122px; height: 30px; flex: none; border: 1px solid #999288; border-radius: 4px; display: flex; position: relative; font-size: 13px; color: #5b5b58; background: var(--c); }
.node.last { margin-top: 5px; }
.node > i { width: 31px; display: flex; align-items: center; justify-content: center; background: rgba(120,120,120,.1); color: #d2d0ca; }
.node > span { flex: 1; text-align: center; line-height: 28px; white-space: nowrap; }
.node::after, .io::before, .flownode::before, .flownode::after { content: ""; position: absolute; top: 9px; right: -6px; width: 10px; height: 10px; border: 1px solid #9b9b9b; border-radius: 2px; background: #c5c4c6; }
.io::before { left: -5px; right: auto; }
.yellow { --c: #bfae76; }
.tan { --c: #c2ac90; }
.orange { --c: linear-gradient(#cbbfae, #cd9661); }
.red { --c: linear-gradient(#c9b8ae, #b96a59); }
.green { --c: linear-gradient(#c0cfbd, #68be62); }
.blue { --c: linear-gradient(#bccbd1, #6a9db8); }
.olive { --c: #c0c3a0; }
.mustard { --c: #bdb55e; }
.teal { --c: #92b3bf; }
.slate { --c: #9ba8b6; }
.pal-foot { height: 27px; border-top: 1px solid #a9a9a9; background: #c8c8c8; display: flex; padding: 4px 0 0 135px; color: #858585; }
.pal-foot span { width: 19px; height: 19px; margin-right: -1px; border: 1px solid #b2b2b2; background: #cecece; display: flex; align-items: center; justify-content: center; }

/* flow workspace */
.workspace { width: 907px; flex: none; display: flex; flex-direction: column; background: #d0d0d0; }
.wtabs { height: 36px; flex: none; display: flex; gap: 6px; padding: 4px 0 0 23px; border-bottom: 1px solid #b5b5b5; }
.wtab { width: 200px; height: 31px; border: 1px solid #b8b8b8; border-bottom: 0; background: #c8c8c8; color: #929292; padding: 4px 0 0 12px; }
.wtab.on { height: 33px; background: #d0d0d0; color: #767676; font-weight: 700; }
.canvas { height: 850px; position: relative; background: repeating-linear-gradient(90deg, transparent 0 19px, #c6c6c6 19px 20px), repeating-linear-gradient(transparent 0 19px, #c6c6c6 19px 20px), #d0d0d0; }
.flownode { position: absolute; left: 628px; top: 424px; width: 122px; height: 32px; border: 2px solid #b8835f; border-radius: 5px; background: linear-gradient(90deg, rgba(100,100,100,.08) 30px, transparent 30px), linear-gradient(#bccdb9, #6fbf69); display: flex; align-items: center; color: #566154; }
.flownode span { margin-left: 15px; }
.uicon { margin-left: 7px; }
.flownode::before { left: -6px; right: auto; }
.warn { position: absolute; left: 90px; top: -7px; }
.dot { position: absolute; left: 103px; top: -9px; }
.hbar { height: 16px; display: flex; align-items: center; padding-left: 5px; background: #cacaca; color: #858585; }
.hthumb { margin-left: 7px; width: 382px; height: 13px; background: #acacac; }
.wfoot { height: 27px; border-top: 1px solid #a9a9a9; background: #c8c8c8; }

/* edit tray */
.tray { width: 510px; flex: none; display: flex; background: #f4f4f4; position: relative; box-shadow: -1px 0 8px rgba(0,0,0,.4); clip-path: inset(0 0 0 -12px); }
.grip { width: 4px; height: 50px; margin: 438px 0 0 3px; background: #c2c2c2; }
.tray-in { margin-left: auto; width: 502px; border-left: 1px solid #bbb; border-right: 1px solid #bbb; background: #fff; display: flex; flex-direction: column; }
.crumb { height: 37px; background: #f3f3f3; border-bottom: 1px solid #ddd; padding: 8px; color: #888; white-space: nowrap; }
.crumb b { color: #444; margin-left: 1px; }
.tbar { height: 47px; background: #f3f3f3; border-bottom: 1px solid #ccc; display: flex; justify-content: flex-end; padding: 6px 13px 0 0; gap: 15px; }
.btn { height: 35px; border: 1px solid #c4c4c4; background: #fff; color: #888; text-align: center; line-height: 33px; width: 74px; }
.btn.add { width: 56px; background: #6e0a1e; border-color: #4d2450; color: #eee; position: relative; }
.hand { position: absolute; left: 29px; top: 16px; }
.ttabs { height: 35px; border-bottom: 1px solid #bbb; display: flex; padding: 3px 2px 0 3px; }
.ttab { width: 200px; height: 32px; border: 1px solid #bbb; border-bottom: 0; background: #fff; display: flex; align-items: center; gap: 6px; padding: 0 0 2px 12px; margin-right: auto; color: #555; }
.ttab b { color: #444; }
.sq { width: 28px; height: 28px; border: 1px solid #ccc; background: #fff; display: flex; align-items: center; justify-content: center; color: #777; margin-top: 1px; margin-left: 6px; }
.sq.on { background: #ececec; border-bottom: 2px solid #999; color: #555; }
.form { height: 773px; padding: 20px 0 0 20px; color: #555; }
.row { display: flex; height: 34px; margin-bottom: 12px; }
.row label { width: 104px; padding-top: 6px; }
.row label svg { display: inline-block; vertical-align: -1px; margin-right: 4px; }
.row.chain label svg, .row.pass label svg, .row.addr label svg { vertical-align: 4px; margin-right: 3px; }
.row.wal label svg { vertical-align: -2px; }
.inp { width: 322px; height: 34px; border: 1px solid #c6c6c6; border-radius: 4px; background: #fff; }
.err { border-color: #c2606e; }
.dis { background: #f7f7f7; }
.wal { margin-bottom: 8px; }
.row.wal label { padding-top: 5px; }
.wal .inp { width: 202px; }
.pass { margin-bottom: 15px; }
.pass label { padding-top: 6px; }
.addr { height: 46px; align-items: flex-end; }
.row.addr label { padding: 0 0 9px; }
.addr .inp { width: 282px; }
.ib { width: 34px; height: 34px; border: 1px solid #ccc; border-radius: 2px; display: flex; align-items: center; justify-content: center; color: #777; margin-left: 6px; }
.ib.b3 { width: 33px; margin-left: 7px; }
.tfoot { height: 37px; border-top: 1px solid #bbb; background: #f3f3f3; display: flex; padding: 5px 0 0 6px; border-bottom: 1px solid #bbb; }
.enabled { width: 88px; height: 26px; border: 1px solid #ccc; display: flex; align-items: center; padding-left: 8px; gap: 7px; color: #777; }
.enabled i, .t1 i { width: 12px; height: 12px; border: 1px solid #888; border-radius: 50%; }
.uses { display: flex; align-items: center; height: 24px; margin-left: 10px; gap: 4px; width: 180px; white-space: nowrap; }
.select { width: 200px; height: 23px; margin: 2px 0 0 10px; border: 1px solid #c8c8c8; border-radius: 4px; background: #fff; display: flex; align-items: center; justify-content: space-between; padding: 0 4px; white-space: nowrap; }
.select svg { color: #333; }

.sep { width: 7px; flex: none; background: linear-gradient(#c4c4c4, #c4c4c4) 1px 438px / 4px 50px no-repeat, #f4f4f4; }

/* sidebar */
.sidebar { width: 315px; flex: none; border-left: 1px solid #bbb; border-right: 1px solid #bbb; display: flex; flex-direction: column; font-size: 14px; background: #fff; }
.stabs { height: 36px; flex: none; display: flex; padding: 4px 0 0 3px; border-bottom: 1px solid #bbb; }
.stab { width: 168px; height: 32px; border: 1px solid #bbb; border-bottom: 0; background: #fff; display: flex; align-items: center; padding: 0 0 4px 12px; gap: 13px; margin-right: 4px; color: #666; }
.stab b { color: #333; }
.more { margin: 13px 0 0 17px; color: #666; }
.ssearch { height: 39px; flex: none; background: #f3f3f3; border-bottom: 1px solid #ccc; display: flex; justify-content: flex-end; padding: 6px 8px 0 0; }
.ssearch div { width: 182px; height: 26px; border: 1px solid #ddd; background: #fff; display: flex; align-items: center; padding: 0 5px 0 7px; color: #777; }
.ssearch span { flex: 1; margin-left: 6px; font-size: 13px; color: #999; }
.outline { height: 386px; flex: none; display: flex; background: #f7f7f7; }
.tree { width: 297px; height: 150px; background: #fff; font-size: 13px; margin-top: -1px; }
.t0 { height: 24px; display: flex; align-items: center; padding-left: 6px; gap: 9px; }
.t1 { height: 26px; display: flex; align-items: center; padding-left: 27px; gap: 8px; }
.t1 svg + svg { color: #666; }
.t1 span { flex: 1; margin-left: -1px; }
.t1 i { width: 9px; height: 9px; border-color: #999; margin-right: 14px; }
.vbar { flex: 1; background: #f1f1f1; display: flex; flex-direction: column; justify-content: space-between; align-items: center; padding: 7px 0; color: #909090; }
.split { height: 7px; flex: none; border: solid #ccc; border-width: 1px 0; background: #f7f7f7; display: flex; justify-content: center; }
.split i { width: 2px; background: #aaa; }
.ihead { height: 46px; flex: none; background: #f3f3f3; border-bottom: 1px solid #ccc; display: flex; align-items: center; padding: 0 8px 1px 14px; }
.ihead b { flex: 1; margin-left: 5px; color: #444; }
.gearbox { width: 32px; height: 27px; border: 1px solid #aaa; border-radius: 3px; background: #ccc; color: #fff; display: flex; align-items: center; justify-content: center; }
.mini { width: 21px; height: 20px; margin-left: 3px; border: 1px solid #ccc; background: #fff; display: flex; align-items: center; justify-content: center; color: #777; }
.details { height: 239px; flex: none; display: flex; }
.dcol { width: 297px; }
.drow { display: flex; border-bottom: 1px solid #ccc; height: 31px; }
.drow span { width: 100px; padding: 4px 0 0 5px; background: #f8f8f8; border-right: 1px solid #ccc; }
.drow em { padding: 7px 0 0 8px; color: #a92b3b; }
.drow.r2 { height: 27px; }
.drow.r2 em { padding: 4px 0 0 6px; color: #555; }
.showmore { display: flex; justify-content: flex-end; align-items: center; gap: 6px; height: 27px; padding-right: 3px; font-size: 11px; color: #444; }
.tips { height: 149px; flex: none; border-top: 1px solid #ccc; box-shadow: 0 -4px 10px rgba(0,0,0,.05); background: #fff; color: #999; padding: 5px 6px 0; }
.tipbtns { display: flex; justify-content: flex-end; gap: 4px; color: #666; }
.tipbtns div { width: 19px; height: 19px; border: 1px solid #ccc; display: flex; align-items: center; justify-content: center; }
.tips p { margin: 21px 5px 0 0; text-align: center; font-size: 16px; line-height: 30px; white-space: nowrap; }
.tips kbd { font: 14.500px "DejaVu Sans Mono", monospace; display: inline-block; line-height: 20px; padding: 3px 4px; border: 1px solid #bbb; border-radius: 3px; background: #f7f7f7; box-shadow: 1px 1px 2px rgba(0,0,0,.2); }
.sfoot { flex: 1; border-top: 1px solid #aaa; background: #f3f3f3; border-bottom: 1px solid #bbb; }

/* taskbar */
.taskbar { height: 40px; flex: none; background: linear-gradient(90deg, #233942 0, #233942 52%, #1d3040 68%, #1e2b46 86%, #1b2745 100%); display: flex; }
.tk { width: 48px; display: flex; align-items: center; justify-content: center; }
.tk.w { width: 49px; position: relative; }
.tk.edge { margin-left: 3px; }
.run::after { content: ""; position: absolute; left: 5px; right: 5px; bottom: 0; height: 2px; background: #76b0e2; }
.hot { background: #4c5e66; }
.hot::after { left: 0; right: 0; }
.rx { font: 7px "Liberation Sans", sans-serif; fill: #fff; }
.clock { margin-left: auto; width: 65px; text-align: center; font: 12px/18px "Open Sans", sans-serif; color: #f0f2f4; padding-top: 2px; letter-spacing: -.4px; white-space: nowrap; }
```
